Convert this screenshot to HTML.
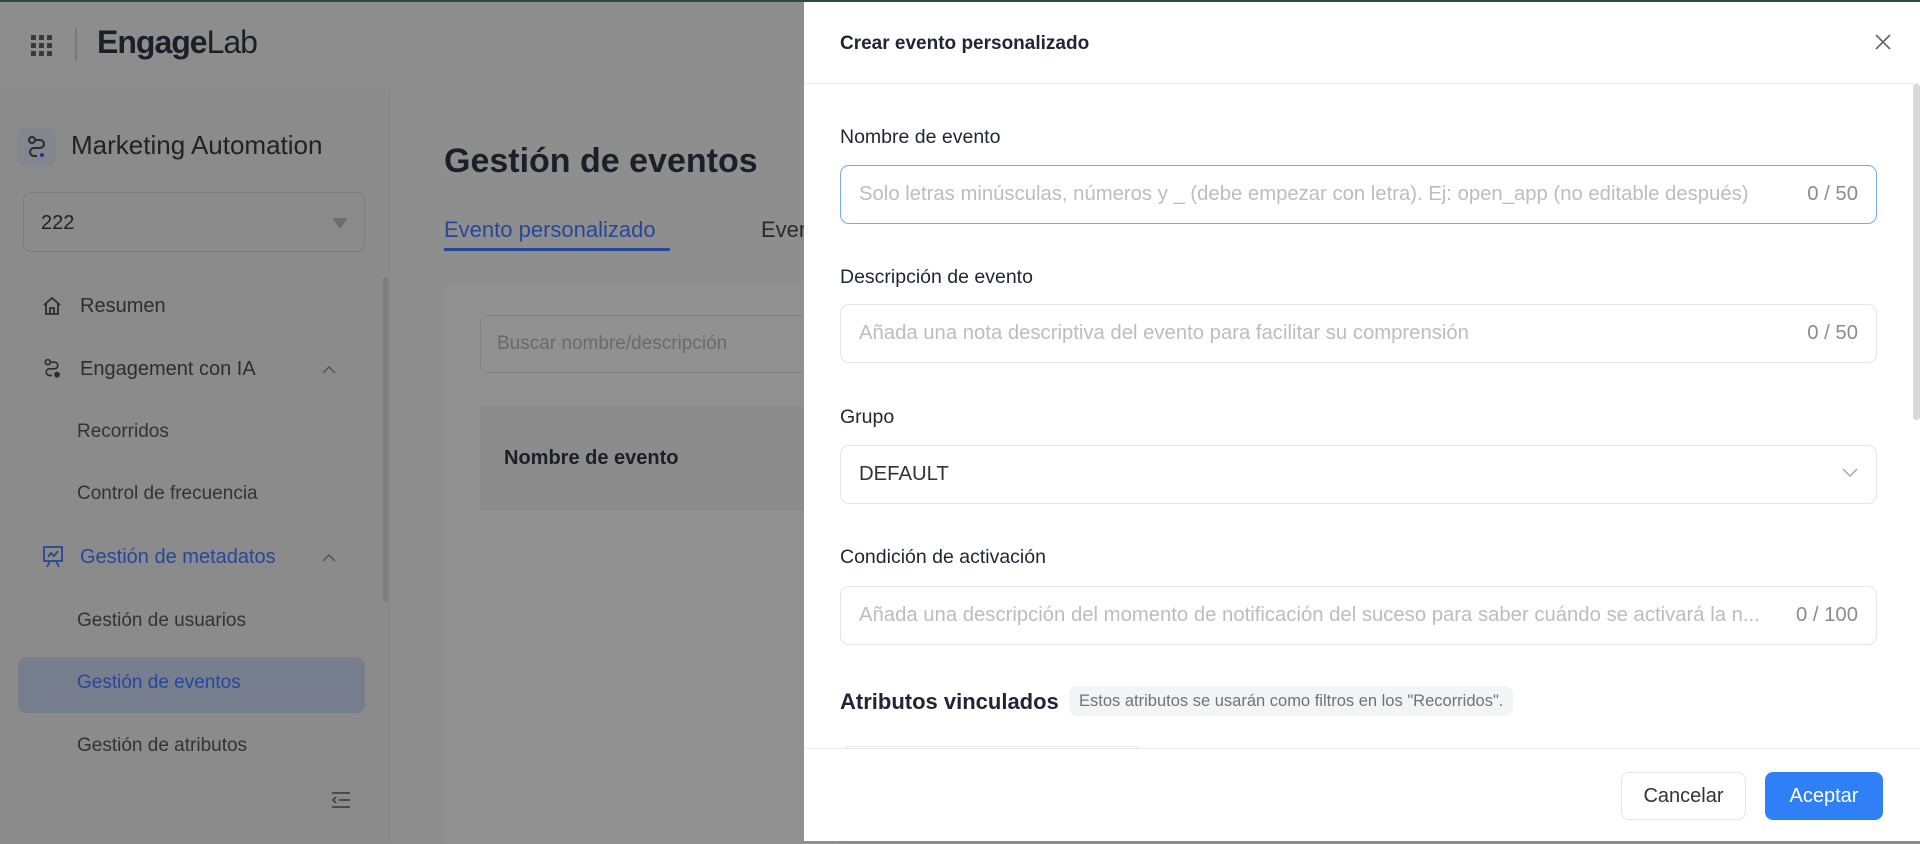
<!DOCTYPE html>
<html><head><meta charset="utf-8"><style>
*{box-sizing:border-box;margin:0;padding:0}
body{width:1920px;height:839px;overflow:hidden;font-family:"Liberation Sans",sans-serif;background:#8c8c8c;position:relative;border-top:2px solid #2d4a44}
.abs{position:absolute}
.hdr{left:0;top:0;width:804px;height:85px;background:#8d8d8d;box-shadow:0 2px 6px rgba(0,0,0,.12)}
.side{left:0;top:85px;width:390px;height:754px;background:#8b8b8b;border-right:1px solid #858585}
.main{left:391px;top:85px;width:413px;height:754px;background:#8e8e8e}
.mi{position:absolute;font-size:20px;color:#2e2e2e}
.sub{left:77px;color:#333}
.drawer{left:804px;top:0;width:1116px;height:839px;background:#fff}
.lbl{position:absolute;left:36px;font-size:19.5px;color:#1f2533}
.inp{position:absolute;left:36px;width:1037px;height:59px;border:1px solid #e3e5e8;border-radius:9px;font-size:20.3px;color:#bdbdbd;padding:0 18px;line-height:57px;white-space:nowrap}
.inp .c{position:absolute;right:18px;top:0;color:#8c8c8c}
</style></head><body>
<div class="abs hdr">
  <svg class="abs" style="left:31px;top:33px" width="22" height="22" viewBox="0 0 22 22" fill="#3a3a3a">
    <rect x="0" y="0" width="5" height="5"/><rect x="8" y="0" width="5" height="5"/><rect x="16" y="0" width="5" height="5"/>
    <rect x="0" y="8" width="5" height="5"/><rect x="8" y="8" width="5" height="5"/><rect x="16" y="8" width="5" height="5"/>
    <rect x="0" y="16" width="5" height="5"/><rect x="8" y="16" width="5" height="5"/><rect x="16" y="16" width="5" height="5"/>
  </svg>
  <div class="abs" style="left:75px;top:26px;width:2px;height:33px;background:#7a7a7a"></div>
  <div class="abs" style="left:97px;top:22px;font-size:32px;color:#1b1f2a;letter-spacing:-1px"><b>Engage</b><span>Lab</span></div>
</div>
<div class="abs side">
  <div class="abs" style="left:17px;top:40px;width:39px;height:40px;border-radius:10px;background:#84858f"></div>
  <svg class="abs" style="left:25px;top:48px" width="24" height="24" viewBox="0 0 24 24" fill="none" stroke="#2b2b2b" stroke-width="2"><circle cx="7" cy="5" r="3"/><path d="M10 5h5a4 4 0 0 1 0 8H9a4 4 0 0 0 0 8h3"/><circle cx="17" cy="20" r="2" fill="#2a2f9a" stroke="none"/></svg>
  <div class="abs" style="left:71px;top:43px;font-size:26px;color:#222">Marketing Automation</div>
  <div class="abs" style="left:23px;top:105px;width:342px;height:60px;border:1px solid #7c7c7c;border-radius:8px;font-size:20px;color:#222;padding:19px 17px">222
    <div class="abs" style="right:16px;top:25px;width:0;height:0;border-left:8px solid transparent;border-right:8px solid transparent;border-top:11px solid #6e6e6e"></div></div>
  <svg class="abs" style="left:42px;top:209px" width="20" height="20" viewBox="0 0 20 20" fill="none" stroke="#2e2e2e" stroke-width="1.8"><path d="M2 9L10 2l8 7M4 7v11h12V7M8 18v-6h4v6"/></svg>
  <div class="mi" style="left:80px;top:208px">Resumen</div>
  <svg class="abs" style="left:42px;top:271px" width="20" height="20" viewBox="0 0 24 24" fill="none" stroke="#2e2e2e" stroke-width="2"><circle cx="7" cy="5" r="3"/><path d="M10 5h5a4 4 0 0 1 0 8H9a4 4 0 0 0 0 8h3"/><circle cx="18" cy="20" r="2.5" fill="#2e2e2e"/></svg>
  <div class="mi" style="left:80px;top:271px">Engagement con IA</div>
  <svg class="abs" style="left:322px;top:279px" width="14" height="8" viewBox="0 0 14 8" fill="none" stroke="#555" stroke-width="1.5"><path d="M1 7l6-6 6 6"/></svg>
  <div class="mi sub" style="top:334px;font-size:19px">Recorridos</div>
  <div class="mi sub" style="top:396px;font-size:19px">Control de frecuencia</div>
  <svg class="abs" style="left:43px;top:459px" width="20" height="22" viewBox="0 0 20 22" fill="none" stroke="#26479a" stroke-width="1.8"><rect x="1" y="1" width="18" height="14"/><path d="M5 11l3-4 3 3 4-5M7 15l-3 6M13 15l3 6"/></svg>
  <div class="mi" style="left:80px;top:459px;color:#26479a">Gestión de metadatos</div>
  <svg class="abs" style="left:322px;top:467px" width="14" height="8" viewBox="0 0 14 8" fill="none" stroke="#555" stroke-width="1.5"><path d="M1 7l6-6 6 6"/></svg>
  <div class="mi sub" style="top:523px;font-size:19px">Gestión de usuarios</div>
  <div class="abs" style="left:18px;top:570px;width:347px;height:56px;border-radius:8px;background:#777f8e"></div>
  <div class="mi sub" style="top:585px;font-size:19px;color:#26479a">Gestión de eventos</div>
  <div class="mi sub" style="top:648px;font-size:19px">Gestión de atributos</div>
  <svg class="abs" style="left:331px;top:704px" width="20" height="18" viewBox="0 0 20 18" fill="none" stroke="#444" stroke-width="1.8"><path d="M1 2h18M8 9h11M1 16h18M5 6L2 9l3 3"/></svg>
  <div class="abs" style="left:383px;top:190px;width:5px;height:325px;border-radius:3px;background:#7d7d7d"></div>
</div>
<div class="abs main">
  <div class="abs" style="left:53px;top:55px;font-size:34px;font-weight:bold;color:#1b1f2a">Gestión de eventos</div>
  <div class="abs" style="left:53px;top:130px;font-size:22px;color:#26479a">Evento personalizado</div>
  <div class="abs" style="left:53px;top:161px;width:226px;height:3px;background:#26479a"></div>
  <div class="abs" style="left:370px;top:130px;font-size:22px;color:#2a2a2a">Even</div>
  <div class="abs" style="left:53px;top:197px;width:400px;height:560px;background:#919191;border-radius:8px"></div>
  <div class="abs" style="left:89px;top:228px;width:340px;height:58px;border:1px solid #848484;border-radius:8px;font-size:19px;color:#6a6a6a;padding:17px 16px;white-space:nowrap;overflow:hidden">Buscar nombre/descripción</div>
  <div class="abs" style="left:89px;top:319px;width:340px;height:104px;background:#8c8c8c;border-bottom:1px solid #868686"></div>
  <div class="abs" style="left:113px;top:360px;font-size:20px;font-weight:bold;color:#1b1f2a">Nombre de evento</div>
</div>
<div class="abs drawer">
  <div class="abs" style="left:36px;top:31px;font-size:19px;font-weight:bold;color:#1f2533">Crear evento personalizado</div>
  <svg class="abs" style="left:1070px;top:31px" width="18" height="18" viewBox="0 0 18 18" stroke="#666" stroke-width="1.6"><path d="M2 2l14 14M16 2L2 16"/></svg>
  <div class="abs" style="left:0;top:81px;width:1116px;height:1px;background:#eceef1"></div>
  <div class="abs" style="left:1109px;top:82px;width:7px;height:336px;background:#d9d9d9;border-radius:3px"></div>
  <div class="lbl" style="top:124px">Nombre de evento</div>
  <div class="inp" style="top:163px;border-color:#7aa7f0">Solo letras minúsculas, números y _ (debe empezar con letra). Ej: open_app (no editable después)<span class="c">0 / 50</span></div>
  <div class="lbl" style="top:264px">Descripción de evento</div>
  <div class="inp" style="top:302px">Añada una nota descriptiva del evento para facilitar su comprensión<span class="c">0 / 50</span></div>
  <div class="lbl" style="top:404px">Grupo</div>
  <div class="inp" style="top:443px;color:#333">DEFAULT
    <svg class="abs" style="right:18px;top:22px" width="16" height="10" viewBox="0 0 16 10" fill="none" stroke="#aaa" stroke-width="1.5"><path d="M1 1l7 7 7-7"/></svg></div>
  <div class="lbl" style="top:544px">Condición de activación</div>
  <div class="inp" style="top:584px">Añada una descripción del momento de notificación del suceso para saber cuándo se activará la n...<span class="c">0 / 100</span></div>
  <div class="abs" style="left:36px;top:687px;font-size:22px;font-weight:bold;color:#1f2533">Atributos vinculados</div>
  <div class="abs" style="left:265px;top:684px;height:30px;padding:0 10px;border-radius:8px;background:#f3f4f6;font-size:16.5px;color:#6b7280;line-height:30px">Estos atributos se usarán como filtros en los "Recorridos".</div>
  <div class="abs" style="left:41px;top:744px;width:294px;height:4px;border:1px solid #e3e5e8;border-bottom:none;border-radius:8px 8px 0 0"></div>
  <div class="abs" style="left:0;top:746px;width:1116px;height:93px;background:#fff;border-top:1px solid #e9ebee"></div>
  <div class="abs" style="left:817px;top:770px;width:125px;height:48px;border:1px solid #e3e5e8;border-radius:8px;font-size:20px;color:#333;text-align:center;line-height:46px">Cancelar</div>
  <div class="abs" style="left:961px;top:770px;width:118px;height:48px;border-radius:8px;background:#2f80f7;font-size:20px;color:#fff;text-align:center;line-height:48px">Aceptar</div>
</div>
</body></html>
